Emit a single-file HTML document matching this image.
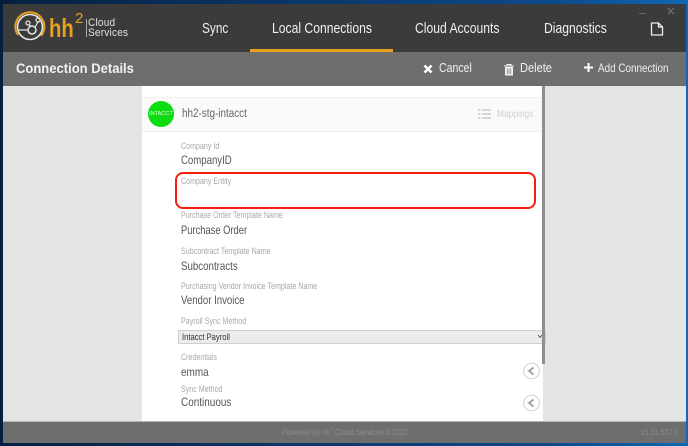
<!DOCTYPE html>
<html><head><meta charset="utf-8">
<style>
html,body{margin:0;padding:0;width:688px;height:446px;overflow:hidden;background:#0b2a52;font-family:"Liberation Sans",sans-serif}
.a{position:absolute;white-space:nowrap;transform-origin:0 50%}
#w{position:absolute;left:0;top:0;width:688px;height:446px;filter:blur(.3px)}
#bg{left:0;top:0;width:688px;height:446px;background:linear-gradient(90deg,#04203f 0,#0a3566 40%,#0c4a8c 80%,#0f67b5 100%)}
.nav{color:#f0f0f0;font-size:15px;line-height:18px;top:20px;transform:scaleX(.81)}
.tb{color:#f0f0f0;font-size:13px;line-height:16px;top:60px;transform:scaleX(.81)}
.lb{color:#a8a8a8;font-size:9px;line-height:11px;left:181px;transform:scaleX(.79)}
.v{color:#555;font-size:12px;line-height:14px;left:181px;transform:scaleX(.8)}
</style></head><body><div id="w">
<div class="a" id="bg"></div>
<div class="a" style="left:3px;top:4px;width:683px;height:48px;background:#3b3b3b"></div>
<div class="a" style="left:3px;top:52px;width:683px;height:34px;background:#6e6e6e"></div>
<div class="a" style="left:3px;top:86px;width:683px;height:335px;background:#e4e4e4"></div>
<div class="a" style="left:3px;top:421px;width:683px;height:22px;background:#6e6e6e;border-top:1px solid #b5b5b5;box-sizing:border-box"></div>

<svg class="a" style="left:14px;top:10px" width="34" height="34" viewBox="0 0 34 34">
<path d="M4 25A14.5 14.5 0 1 1 27 26" fill="none" stroke="#e8a020" stroke-width="2"/>
<circle cx="16" cy="17" r="12.5" fill="none" stroke="#e6e6e6" stroke-width="1.6"/>
<circle cx="18" cy="20" r="4" fill="none" stroke="#e6e6e6" stroke-width="1.5"/>
<circle cx="14" cy="13" r="2" fill="none" stroke="#e6e6e6" stroke-width="1.2"/>
<circle cx="24" cy="10" r="2" fill="none" stroke="#e6e6e6" stroke-width="1.2"/>
<path d="M4 20H14M15 15L17 16M21 17L24 12" stroke="#e6e6e6" stroke-width="1.2" fill="none"/>
</svg>
<div class="a" style="left:49px;top:14px;color:#e8a020;font-size:26px;line-height:28px;font-weight:bold;transform:scaleX(.78)">hh</div>
<div class="a" style="left:75px;top:11px;color:#e8a020;font-size:15px;line-height:16px">2</div>
<div class="a" style="left:86px;top:19px;width:1px;height:18px;background:#aaa"></div>
<div class="a" style="left:88px;top:18px;color:#e0e0e0;font-size:11px;line-height:10px;letter-spacing:.2px;transform:scaleX(.92)">Cloud<br>Services</div>

<div class="a nav" style="left:202px;transform:scaleX(.79)">Sync</div>
<div class="a nav" style="left:272px;">Local Connections</div>
<div class="a nav" style="left:415px">Cloud Accounts</div>
<div class="a nav" style="left:544px">Diagnostics</div>
<div class="a" style="left:250px;top:49px;width:143px;height:3px;background:#e8a020"></div>
<svg class="a" style="left:650px;top:22px" width="14" height="14" viewBox="0 0 14 14"><path d="M1.5 1H8.5L12.5 5V13H1.5ZM8.5 1V5H12.5" fill="none" stroke="#eee" stroke-width="1.3"/></svg>
<div class="a" style="left:639px;top:13px;width:7px;height:1px;background:#666"></div>
<svg class="a" style="left:667px;top:7px" width="8" height="8"><path d="M1 1L7 7M7 1L1 7" stroke="#777" stroke-width="1"/></svg>

<div class="a" style="left:16px;top:59px;color:#f2f2f2;font-size:14px;line-height:18px;font-weight:bold;transform:scaleX(.93)">Connection Details</div>
<svg class="a" style="left:423px;top:64px" width="10" height="10"><path d="M1.5 1.5L8.5 8.5M8.5 1.5L1.5 8.5" stroke="#fff" stroke-width="2.6"/></svg>
<div class="a tb" style="left:439px">Cancel</div>
<svg class="a" style="left:503px;top:63px" width="12" height="13" viewBox="0 0 12 13"><path d="M1 3H11M4 3V1.5H8V3" stroke="#f4f4f4" fill="none" stroke-width="1.1"/><path d="M2 4H10V12.5H2Z" fill="#f4f4f4"/><path d="M4.2 5.5V11M6 5.5V11M7.8 5.5V11" stroke="#6e6e6e" stroke-width=".7"/></svg>
<div class="a tb" style="left:520px;transform:scaleX(.85)">Delete</div>
<svg class="a" style="left:584px;top:63px" width="9" height="9"><path d="M4.5 0V9M0 4.5H9" stroke="#fff" stroke-width="2"/></svg>
<div class="a" style="left:598px;top:61px;color:#f0f0f0;font-size:12px;line-height:14px;transform:scaleX(.825)">Add Connection</div>

<div class="a" style="left:142px;top:86px;width:401px;height:335px;background:#fff"></div>
<div class="a" style="left:142px;top:97px;width:401px;height:35px;background:#fafafa;border-top:1px solid #f0f0f0;border-bottom:1px solid #f0f0f0;box-sizing:border-box"></div>
<div class="a" style="left:148px;top:101px;width:26px;height:26px;border-radius:50%;background:#0ddc10"></div>
<div class="a" style="left:148px;top:111px;width:26px;text-align:center;color:#dfffdc;font-size:5.6px;line-height:7px">INTACCT</div>
<div class="a" style="left:182px;top:107px;color:#666;font-size:11.5px;line-height:14px;transform:scaleX(.86)">hh2-stg-intacct</div>
<svg class="a" style="left:478px;top:108px" width="13" height="12" viewBox="0 0 13 12"><path d="M4 2H13M4 6H13M4 10H13" stroke="#d6d6d6" stroke-width="2"/><path d="M0 2H2.5M0 6H2.5M0 10H2.5" stroke="#d6d6d6" stroke-width="2"/></svg>
<div class="a" style="left:497px;top:107px;color:#d2d2d2;font-size:10.5px;line-height:14px;transform:scaleX(.8)">Mappings</div>

<div class="a lb" style="top:141px">Company Id</div>
<div class="a v" style="top:153px">CompanyID</div>
<div class="a" style="left:175px;top:172px;width:361px;height:37px;border:2px solid #f51e0a;border-radius:8px;box-sizing:border-box"></div>
<div class="a lb" style="top:176px">Company Entity</div>
<div class="a lb" style="top:210px">Purchase Order Template Name</div>
<div class="a v" style="top:223px;transform:scaleX(.78)">Purchase Order</div>
<div class="a lb" style="top:246px">Subcontract Template Name</div>
<div class="a v" style="top:259px;transform:scaleX(.81)">Subcontracts</div>
<div class="a lb" style="top:281px">Purchasing Vendor Invoice Template Name</div>
<div class="a v" style="top:293px">Vendor Invoice</div>
<div class="a lb" style="top:316px">Payroll Sync Method</div>
<div class="a" style="left:178px;top:330px;width:368px;height:14px;background:#ececec;border:1px solid #cfcfcf;box-sizing:border-box"></div>
<div class="a" style="left:182px;top:331px;color:#333;font-size:9.2px;line-height:12px;transform:scaleX(.83)">Intacct Payroll</div>
<svg class="a" style="left:537px;top:334px" width="6" height="5"><path d="M1 1L3 3.5L5 1" fill="none" stroke="#555" stroke-width="1"/></svg>
<div class="a" style="left:542px;top:86px;width:3px;height:278px;background:#8f8f8f"></div>
<div class="a lb" style="top:352px">Credentials</div>
<div class="a v" style="top:365px;transform:scaleX(.83)">emma</div>
<div class="a lb" style="top:384px">Sync Method</div>
<div class="a v" style="top:395px;transform:scaleX(.83)">Continuous</div>
<svg class="a" style="left:522px;top:362px" width="19" height="51" viewBox="0 0 19 51">
<circle cx="9.5" cy="9" r="7.8" fill="#fff" stroke="#d4d4d4" stroke-width="1.1"/><path d="M11.5 5.5L7 9L11.5 12.5" fill="none" stroke="#aaa" stroke-width="2.2"/>
<circle cx="9.5" cy="41" r="7.8" fill="#fff" stroke="#d4d4d4" stroke-width="1.1"/><path d="M11.5 37.5L7 41L11.5 44.5" fill="none" stroke="#aaa" stroke-width="2.2"/>
</svg>

<div class="a" style="left:282px;top:427px;color:#8c8c8c;font-size:8.6px;line-height:11px;transform:scaleX(.845)"><i>Powered by</i> hh<sup style="font-size:5px;line-height:0">2</sup> Cloud Services ©2020</div>
<div class="a" style="left:641px;top:427px;color:#8c8c8c;font-size:8.6px;line-height:11px;transform:scaleX(.84)">v1.31.637.0</div>
</div></body></html>
